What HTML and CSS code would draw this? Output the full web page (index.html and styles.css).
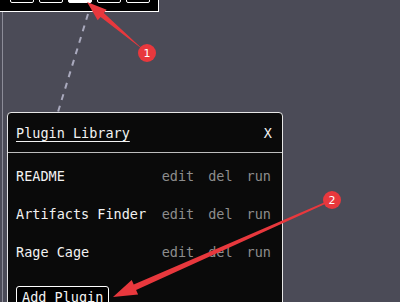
FILE: index.html
```html
<!DOCTYPE html>
<html>
<head>
    <title>Plugin Library</title>
    <link rel="stylesheet" href="styles.css">
</head>
<body>
    <div id="stage">
        <div class="toolbar">
            <button class="tool"></button>
            <button class="tool"></button>
            <button class="tool active"></button>
            <button class="tool"></button>
            <button class="tool"></button>
        </div>
        <div class="canvas">
            <div class="panel">
                <div class="panel-header">
                    <span class="panel-title">Plugin Library</span>
                    <span class="panel-close">X</span>
                </div>
                <div class="plugin-list">
                    <div class="plugin">
                        <span class="plugin-name">README</span>
                        <span class="action">edit</span>
                        <span class="action">del</span>
                        <span class="action">run</span>
                    </div>
                    <div class="plugin">
                        <span class="plugin-name">Artifacts Finder</span>
                        <span class="action">edit</span>
                        <span class="action">del</span>
                        <span class="action">run</span>
                    </div>
                    <div class="plugin">
                        <span class="plugin-name">Rage Cage</span>
                        <span class="action">edit</span>
                        <span class="action">del</span>
                        <span class="action">run</span>
                    </div>
                </div>
                <button class="add-plugin">Add Plugin</button>
            </div>
        </div>

        <!-- annotations drawn over the page -->
        <svg class="overlay" width="400" height="302" viewBox="0 0 400 302">
            <line x1="88" y1="14" x2="58" y2="112" stroke="#a9a9bd" stroke-width="2" stroke-dasharray="6 6"/>
            <polygon fill="#e8383d" points="147.6,53.8 103.8,13.1 106.7,9.7 87,2 97.7,20.3 100.6,16.9 146.4,52.2"/>
            <circle cx="147" cy="53" r="9" fill="#e8383d"/>
            <text x="147" y="57" class="badge">1</text>
            <polygon fill="#e8383d" points="332.3,200.7 136.1,290 138.1,294.6 113,297 131.7,280 133.7,284.6 331.7,199.3"/>
            <circle cx="332" cy="200" r="9" fill="#e8383d"/>
            <text x="332" y="204" class="badge">2</text>
        </svg>
    </div>
</body>
</html>
```

FILE: styles.css
```css
body {
    margin: 0;
    background-color: #4b4b57;
    font-family: "DejaVu Sans Mono", monospace;
    font-size: 13.5px;
    color: #f2f2f2;
}

#stage {
    position: relative;
    width: 400px;
    height: 302px;
    overflow: hidden;
}

.toolbar {
    display: flex;
    gap: 5px;
    width: 142px;
    margin-top: -20px;
    padding: 0 6px 8px 10px;
    background-color: #000;
    border-right: 1px solid #fff;
    border-bottom: 1px solid #fff;
}

.tool {
    width: 24px;
    height: 23px;
    padding: 0;
    background-color: #000;
    border: 1px solid #fff;
    border-radius: 2px;
}

.tool.active {
    background-color: #fff;
}

.canvas {
    margin-left: 2px;
    padding: 100px 0 0 4px;
    border-left: 1px solid #8c8c98;
    height: 300px;
}

.panel {
    width: 274px;
    background-color: #0a0a0a;
    border: 1px solid #e6e6e6;
    border-radius: 4px 4px 0 0;
    padding-bottom: 20px;
}

.panel-header {
    display: flex;
    justify-content: space-between;
    align-items: center;
    height: 39px;
    padding: 0 10px 0 8px;
    border-bottom: 1px solid #bdbdbd;
}

.panel-title {
    text-decoration: underline;
    text-underline-offset: 3px;
}

.plugin-list {
    padding-top: 4px;
}

.plugin {
    display: flex;
    align-items: center;
    height: 38px;
    padding: 0 11px 0 8px;
    white-space: nowrap;
}

.plugin-name {
    flex: 1;
}

.action {
    margin-left: 14px;
    color: #8d8d8d;
}

.add-plugin {
    margin: 15px 0 0 8px;
    padding: 2px 5px;
    font-family: "DejaVu Sans Mono", monospace;
    font-size: 13.5px;
    color: #f2f2f2;
    background-color: #000;
    border: 1px solid #fff;
    border-radius: 3px;
}

.overlay {
    position: absolute;
    left: 0;
    top: 0;
    pointer-events: none;
}

.badge {
    fill: #fff;
    font-family: "DejaVu Sans", sans-serif;
    font-size: 11px;
    text-anchor: middle;
}
```
